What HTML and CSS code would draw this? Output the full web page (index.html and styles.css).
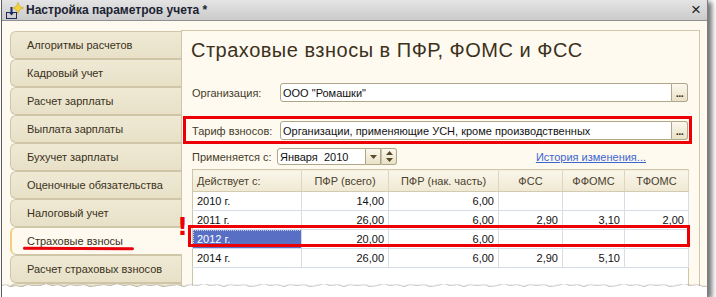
FILE: index.html
```html
<!DOCTYPE html>
<html lang="ru">
<head>
<meta charset="utf-8">
<link rel="stylesheet" href="styles.css">
</head>
<body>
<div class="window">
  <div class="titlebar">
    <svg class="app-icon" width="20" height="18" viewBox="0 0 20 18">
      <path d="M2 10 H5 V11 H3 V16 H12 V11 H10 V10 H13 V17 H2 Z" fill="#1d2b5c"/>
      <path d="M6.5 5 H8.5 V10 H10.5 L7.5 13.5 L4.5 10 H6.5 Z" fill="#1d2b5c"/>
      <path d="M14 0.5 L15.6 4.4 L19.5 6 L15.6 7.6 L14 11.5 L12.4 7.6 L8.5 6 L12.4 4.4 Z" fill="#f6d33a" stroke="#c9a11a" stroke-width="0.6"/>
    </svg>
    <span class="title">Настройка параметров учета *</span>
    <span class="close">×</span>
  </div>
  <div class="body">
    <nav class="tabs">
      <div class="tab">Алгоритмы расчетов</div>
      <div class="tab">Кадровый учет</div>
      <div class="tab">Расчет зарплаты</div>
      <div class="tab">Выплата зарплаты</div>
      <div class="tab">Бухучет зарплаты</div>
      <div class="tab">Оценочные обязательства</div>
      <div class="tab">Налоговый учет</div>
      <div class="tab active">Страховые взносы</div>
      <div class="tab">Расчет страховых взносов</div>
      <div class="tab"></div>
    </nav>
    <main class="panel">
      <h1 class="heading">Страховые взносы в ПФР, ФОМС и ФСС</h1>
      <div class="row org">
        <span class="label">Организация:</span>
        <div class="field"><span class="value">ООО "Ромашки"</span></div>
        <span class="dots">...</span>
      </div>
      <div class="row tarif">
        <span class="label">Тариф взносов:</span>
        <div class="field"><span class="value">Организации, применяющие УСН, кроме производственных</span></div>
        <span class="dots">...</span>
      </div>
      <div class="row date">
        <span class="label short">Применяется с:</span>
        <div class="field datefield"><span class="value">Января&nbsp; 2010</span></div>
        <span class="dd"><svg width="7" height="4" viewBox="0 0 7 4"><path d="M0 0H7L3.5 4Z" fill="#5a4a25"/></svg></span>
        <span class="spin"><svg width="7" height="11" viewBox="0 0 7 11"><path d="M0 4H7L3.5 0Z M0 7H7L3.5 11Z" fill="#5a4a25"/></svg></span>
        <a class="link" href="#">История изменения...</a>
      </div>
      <div class="grid-wrap">
        <table class="grid">
          <colgroup>
            <col class="c1"><col class="c2"><col class="c3"><col class="c4"><col class="c5"><col class="c6">
          </colgroup>
          <thead>
            <tr><th class="left">Действует с:</th><th>ПФР (всего)</th><th>ПФР (нак. часть)</th><th>ФСС</th><th>ФФОМС</th><th>ТФОМС</th></tr>
          </thead>
          <tbody>
            <tr><td class="left">2010 г.</td><td>14,00</td><td>6,00</td><td></td><td></td><td></td></tr>
            <tr><td class="left">2011 г.</td><td>26,00</td><td>6,00</td><td>2,90</td><td>3,10</td><td>2,00</td></tr>
            <tr><td class="left sel">2012 г.</td><td>20,00</td><td>6,00</td><td></td><td></td><td></td></tr>
            <tr><td class="left">2014 г.</td><td>26,00</td><td>6,00</td><td>2,90</td><td>5,10</td><td></td></tr>
            <tr class="empty"><td></td><td></td><td></td><td></td><td></td><td></td></tr>
          </tbody>
        </table>
        <div class="mark-row"></div>
        <div class="bang">!</div>
      </div>
    </main>
  </div>
  <svg class="torn" width="716" height="16" viewBox="0 0 716 16">
    <defs><filter id="b" x="-5%" y="-50%" width="110%" height="200%"><feGaussianBlur stdDeviation="1"/></filter></defs>
    <path d="M0 5 L6 4 L10 6 L16 5 L22 6 L28 4 L33 5 L40 5 L46 3 L52 5 L58 4 L64 6 L70 4 L77 5 L84 4 L90 6 L97 5 L104 4 L110 5 L117 3 L124 5 L130 4 L137 6 L144 4 L150 5 L157 4 L163 6 L170 5 L177 4 L184 6 L190 4 L197 5 L204 3 L210 5 L217 4 L224 6 L230 4 L237 5 L244 4 L250 6 L257 5 L264 3 L270 5 L277 4 L284 6 L290 4 L297 5 L304 4 L310 6 L317 5 L324 3 L330 5 L337 4 L344 6 L350 4 L357 5 L364 4 L370 6 L377 5 L384 3 L390 5 L397 4 L404 6 L410 4 L417 5 L424 4 L430 6 L437 5 L444 3 L450 5 L457 4 L464 6 L470 4 L477 5 L484 4 L490 6 L497 5 L504 3 L510 5 L517 4 L524 6 L530 4 L537 5 L544 4 L550 6 L557 5 L564 3 L570 5 L577 4 L584 6 L590 4 L597 5 L604 4 L610 6 L617 5 L624 3 L630 5 L637 4 L644 6 L650 4 L657 5 L664 4 L670 6 L677 5 L684 3 L690 5 L697 4 L704 6 L716 5" fill="none" stroke="#333" stroke-width="2" filter="url(#b)" transform="translate(0,1.5)"/>
    <path d="M0 5 L6 4 L10 6 L16 5 L22 6 L28 4 L33 5 L40 5 L46 3 L52 5 L58 4 L64 6 L70 4 L77 5 L84 4 L90 6 L97 5 L104 4 L110 5 L117 3 L124 5 L130 4 L137 6 L144 4 L150 5 L157 4 L163 6 L170 5 L177 4 L184 6 L190 4 L197 5 L204 3 L210 5 L217 4 L224 6 L230 4 L237 5 L244 4 L250 6 L257 5 L264 3 L270 5 L277 4 L284 6 L290 4 L297 5 L304 4 L310 6 L317 5 L324 3 L330 5 L337 4 L344 6 L350 4 L357 5 L364 4 L370 6 L377 5 L384 3 L390 5 L397 4 L404 6 L410 4 L417 5 L424 4 L430 6 L437 5 L444 3 L450 5 L457 4 L464 6 L470 4 L477 5 L484 4 L490 6 L497 5 L504 3 L510 5 L517 4 L524 6 L530 4 L537 5 L544 4 L550 6 L557 5 L564 3 L570 5 L577 4 L584 6 L590 4 L597 5 L604 4 L610 6 L617 5 L624 3 L630 5 L637 4 L644 6 L650 4 L657 5 L664 4 L670 6 L677 5 L684 3 L690 5 L697 4 L704 6 L716 5 V16 H0 Z" fill="#ffffff"/>
  </svg>
</div>
</body>
</html>
```
FILE: styles.css
```css
html, body {
  margin: 0;
  padding: 0;
  background: #ffffff;
  width: 716px;
  height: 297px;
  overflow: hidden;
}

.window {
  position: relative;
  margin-left: 1px;
  width: 705px;
  height: 297px;
  border-left: 1px solid #5e5e5e;
  border-right: 1px solid #7d7d7d;
  background: #fefaf0;
  box-shadow: 4px 2px 5px rgba(0, 0, 0, 0.55);
  font-family: "Liberation Sans", Arial, sans-serif;
  font-size: 11px;
  color: #3b3322;
  overflow: hidden;
}

.titlebar {
  height: 20px;
  border-bottom: 1px solid #8f8f8f;
  background: linear-gradient(#e4e4e4, #cbcbcb);
  display: flex;
  align-items: center;
  padding-left: 2px;
}

.app-icon {
  flex: none;
  margin-top: 1px;
}

.title {
  margin-left: 2px;
  font-weight: bold;
  font-size: 12px;
  color: #1b2333;
}

.close {
  margin-left: auto;
  margin-right: 6px;
  font-size: 17px;
  line-height: 16px;
  color: #222;
}

.body {
  display: flex;
  padding-top: 9px;
}

.tabs {
  width: 171px;
  margin-left: 8px;
  margin-top: 1px;
  flex: none;
  display: flex;
  flex-direction: column;
}

.tab {
  position: relative;
  height: 28px;
  box-sizing: border-box;
  border: 1px solid #cfc6a8;
  border-right: none;
  border-radius: 6px 0 0 6px;
  background: linear-gradient(#efe9d5, #e8e1c8);
  padding-left: 16px;
  display: flex;
  align-items: center;
  color: #3a3120;
  white-space: nowrap;
}

.tab.active {
  background: #fefaf0;
  margin-right: -1px;
  z-index: 1;
  border-left: 2px solid #f1cf7c;
  padding-left: 15px;
}

.tab.active::after {
  content: "";
  position: absolute;
  left: 11px;
  top: 19px;
  width: 111px;
  height: 3px;
  border-radius: 2px;
  background: #e8000b;
  transform: rotate(0.3deg);
}

.panel {
  width: 507px;
  flex: none;
  height: 300px;
  border-top: 1px solid #cfc6a8;
  border-left: 1px solid #cfc6a8;
  border-right: 1px solid #cfc6a8;
  padding-left: 10px;
  padding-right: 0;
}

.heading {
  margin: 0;
  padding-top: 7px;
  font-weight: normal;
  font-size: 20px;
  line-height: 24px;
  color: #3d311c;
  margin-left: -1px;
  letter-spacing: 0.5px;
}

.row {
  display: flex;
  align-items: center;
  width: 496px;
}

.org {
  margin-top: 21px;
}

.label {
  width: 88px;
  flex: none;
  color: #453c2a;
  white-space: nowrap;
}

.label.short {
  width: 85px;
}

.field {
  flex: 1;
  height: 19px;
  box-sizing: border-box;
  border: 1px solid #b0a788;
  border-radius: 3px 0 0 3px;
  background: #ffffff;
  display: flex;
  align-items: center;
  padding-left: 2px;
  color: #111;
  white-space: nowrap;
}

.dots {
  flex: none;
  width: 16px;
  height: 19px;
  box-sizing: border-box;
  border: 1px solid #b0a788;
  border-left: none;
  border-radius: 0 3px 3px 0;
  background: linear-gradient(#fbf8ee, #e9e2c8);
  color: #3b3017;
  font-weight: bold;
  font-size: 11px;
  line-height: 19px;
  text-align: center;
  letter-spacing: -0.5px;
}

.tarif {
  margin-top: 14px;
  margin-left: -9px;
  width: 496px;
  border: 3px solid #ec0006;
  padding: 2px 1px 1px 6px;
}

.date {
  margin-top: 4px;
}

.datefield {
  flex: none;
  width: 89px;
  height: 17px;
}

.dd, .spin {
  flex: none;
  width: 15px;
  height: 17px;
  box-sizing: border-box;
  border: 1px solid #b0a788;
  border-left: none;
  background: linear-gradient(#fbf8ee, #e9e2c8);
  display: flex;
  align-items: center;
  justify-content: center;
}

.spin {
  width: 16px;
  border-left: 1px solid #c9c0a2;
  border-radius: 0 3px 3px 0;
}

.link {
  margin-left: auto;
  margin-right: 42px;
  color: #3c66cf;
  text-decoration: underline;
}

.grid-wrap {
  position: relative;
  margin-top: 4px;
  width: 497px;
}

.grid {
  border-collapse: collapse;
  table-layout: fixed;
  width: 497px;
  background: #ffffff;
  border: 1px solid #cfc6a8;
}

.c1 { width: 109px; }
.c2 { width: 87px; }
.c3 { width: 110px; }
.c4 { width: 64px; }
.c5 { width: 62px; }
.c6 { width: 64px; }

.grid th {
  height: 21px;
  padding: 0;
  font-weight: normal;
  background: linear-gradient(#faf6ea, #efe8d3);
  border-right: 1px solid #ddd5bc;
  border-bottom: 1px solid #d3cbb0;
  color: #4a412d;
  text-align: center;
}

.grid th.left {
  text-align: left;
  padding-left: 4px;
}

.grid td {
  height: 18px;
  padding: 0 4px 0 0;
  border-right: 1px solid #d7dde6;
  border-bottom: 1px solid #d7dde6;
  text-align: right;
  color: #111;
}

.grid td.left {
  text-align: left;
  padding-left: 4px;
}

.grid td.sel {
  background: #586fc4;
  color: #ffffff;
  outline: 1px dotted #c8d2f0;
  outline-offset: -1px;
}

.grid tr.empty td {
  height: 30px;
  border: none;
}

.mark-row {
  position: absolute;
  left: -4px;
  top: 56px;
  width: 496px;
  height: 16px;
  border: 3px solid #ec0006;
}

.bang {
  position: absolute;
  z-index: 3;
  left: -15px;
  top: 46px;
  color: #ec0006;
  font-family: "DejaVu Sans", sans-serif;
  font-weight: bold;
  font-size: 24px;
  line-height: 24px;
}

.torn {
  position: absolute;
  left: -2px;
  bottom: 0;
  width: 716px;
  height: 16px;
  z-index: 5;
}
```
